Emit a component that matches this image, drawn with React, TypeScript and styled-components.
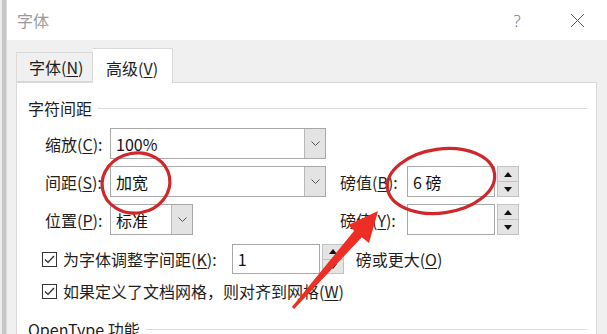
import styled, { createGlobalStyle } from "styled-components";

const GlobalStyle = createGlobalStyle`
  html, body {
    margin: 0;
    padding: 0;
  }
  body {
    width: 607px;
    height: 334px;
    overflow: hidden;
    background: #f0f0f0;
    font-family: "Noto Sans CJK SC", "Noto Sans", sans-serif;
  }
`;

const Screen = styled.div`
  position: relative;
  display: flex;
  width: 607px;
  height: 334px;
  overflow: hidden;
`;

const EdgeStrip = styled.div`
  flex: none;
  width: 7px;
  background: linear-gradient(to right, #ececec 0 2px, #c6c6c6 2px 6px, #dcdcdc 6px);
`;

const Dialog = styled.div`
  flex: 1;
  display: flex;
  flex-direction: column;
  background: #f0f0f0;
`;

const TitleBar = styled.div`
  flex: none;
  height: 40px;
  display: flex;
  align-items: center;
  padding-left: 10px;
  background: #fff;
  color: #9b9b9b;
  font-size: 16px;
`;

const TitleButtons = styled.div`
  margin-left: auto;
  display: flex;
  align-items: center;
  gap: 17px;
  padding-right: 7px;
`;

const HelpButton = styled.span`
  width: 40px;
  text-align: center;
  font-family: "Noto Sans", sans-serif;
  font-size: 17px;
  font-weight: 300;
  color: #7a7a7a;
`;

const CloseButton = styled.span`
  width: 46px;
  display: flex;
  justify-content: center;
`;

const Body = styled.div`
  flex: 1;
  display: flex;
  flex-direction: column;
  padding: 8px 10px 0 9px;
`;

const TabRow = styled.div`
  display: flex;
  align-items: flex-end;
  height: 34px;
`;

const Tab = styled.div<{ $active?: boolean; $width: number }>`
  box-sizing: border-box;
  width: ${(p) => p.$width}px;
  height: ${(p) => (p.$active ? 35 : 30)}px;
  padding: ${(p) => (p.$active ? "4px 0 1px 13px" : "0 0 0 12px")};
  margin-bottom: ${(p) => (p.$active ? "-1px" : "0")};
  display: flex;
  align-items: center;
  border: 1px solid #d9d9d9;
  border-bottom: ${(p) => (p.$active ? "none" : "1px solid #d9d9d9")};
  border-left: ${(p) => (p.$active ? "none" : "1px solid #d9d9d9")};
  background: ${(p) => (p.$active ? "#fff" : "#f0f0f0")};
  font-size: 16px;
  color: #1e1e1e;
  position: relative;
  z-index: 1;
`;

const Panel = styled.div`
  flex: 1;
  background: #fff;
  border: 1px solid #d9d9d9;
  padding: 14px 0 0 11px;
`;

const GroupHeading = styled.div<{ $top?: number }>`
  display: flex;
  align-items: center;
  gap: 6px;
  height: 22px;
  margin-top: ${(p) => p.$top ?? 0}px;
  padding-right: 9px;
  font-size: 16px;
  color: #1e1e1e;
  white-space: nowrap;
`;

const GroupLine = styled.span`
  flex: 1;
  height: 1px;
  background: #dcdcdc;
`;

const FieldGrid = styled.div`
  display: grid;
  grid-template-columns: 65px 230px 67px auto;
  grid-auto-rows: 31px;
  row-gap: 7px;
  align-items: center;
  margin-top: 9px;
  padding-left: 17px;
`;

const Label = styled.span<{ $newRow?: boolean }>`
  grid-column: ${(p) => (p.$newRow ? 1 : "auto")};
  font-size: 16px;
  line-height: 22px;
  color: #1e1e1e;
  white-space: nowrap;
`;

const Key = styled.u`
  text-underline-offset: 2px;
`;

const SelectBox = styled.div<{ $width: number }>`
  box-sizing: border-box;
  width: ${(p) => p.$width}px;
  height: 31px;
  display: flex;
  border: 1px solid #a8a8a8;
  background: #fff;
`;

const FieldValue = styled.span`
  flex: 1;
  display: flex;
  align-items: center;
  padding-left: 5px;
  font-size: 16px;
  color: #111;
`;

const DropButton = styled.span`
  width: 20px;
  display: flex;
  align-items: center;
  justify-content: center;
  background: #e3e3e3;
  border-left: 1px solid #b8b8b8;
`;

const SpinBox = styled.div<{ $height: number }>`
  display: flex;
  gap: 2px;
  height: ${(p) => p.$height}px;
`;

const SpinField = styled.div<{ $width: number }>`
  box-sizing: border-box;
  width: ${(p) => p.$width}px;
  display: flex;
  border: 1px solid #a8a8a8;
  background: #fff;
`;

const SpinButtons = styled.div`
  box-sizing: border-box;
  width: 22px;
  display: flex;
  flex-direction: column;
  border: 1px solid #c2c2c2;
  background: #e4e4e4;
`;

const SpinButton = styled.span<{ $down?: boolean }>`
  flex: 1;
  display: flex;
  align-items: center;
  justify-content: center;
  border-top: ${(p) => (p.$down ? "1px solid #c2c2c2" : "none")};
`;

const CheckRow = styled.div<{ $height: number; $top: number }>`
  display: flex;
  align-items: center;
  height: ${(p) => p.$height}px;
  margin-top: ${(p) => p.$top}px;
  padding-left: 14px;
`;

const CheckBox = styled.span`
  box-sizing: border-box;
  flex: none;
  width: 15px;
  height: 15px;
  margin-right: 6px;
  display: flex;
  align-items: center;
  justify-content: center;
  border: 1px solid #333;
  background: #fff;
`;

const Gap = styled.span<{ $w: number }>`
  flex: none;
  width: ${(p) => p.$w}px;
`;

const Overlay = styled.svg`
  position: absolute;
  left: 0;
  top: 0;
  pointer-events: none;
`;

const Chevron = () => (
  <svg width="9" height="5" viewBox="0 0 9 5">
    <path d="M0.5 0.5 L4.5 4.5 L8.5 0.5" fill="none" stroke="#555" strokeWidth="1" />
  </svg>
);

const Triangle = ({ down }: { down?: boolean }) => (
  <svg width="8" height="5" viewBox="0 0 8 5">
    <polygon points={down ? "0,0 8,0 4,5" : "0,5 8,5 4,0"} fill="#111" />
  </svg>
);

const Select = ({ value, width }: { value: string; width: number }) => (
  <SelectBox $width={width}>
    <FieldValue>{value}</FieldValue>
    <DropButton>
      <Chevron />
    </DropButton>
  </SelectBox>
);

const Spin = ({ value, width, height }: { value: string; width: number; height: number }) => (
  <SpinBox $height={height}>
    <SpinField $width={width}>
      <FieldValue>{value}</FieldValue>
    </SpinField>
    <SpinButtons>
      <SpinButton>
        <Triangle />
      </SpinButton>
      <SpinButton $down>
        <Triangle down />
      </SpinButton>
    </SpinButtons>
  </SpinBox>
);

const Check = () => (
  <CheckBox>
    <svg width="11" height="9" viewBox="0 0 11 9">
      <path d="M1 4.5 L4 7.5 L10 1" fill="none" stroke="#222" strokeWidth="1.2" />
    </svg>
  </CheckBox>
);

export default function App() {
  return (
    <>
      <GlobalStyle />
      <Screen>
        <EdgeStrip />
        <Dialog>
          <TitleBar>
            字体
            <TitleButtons>
              <HelpButton>?</HelpButton>
              <CloseButton>
                <svg width="15" height="15" viewBox="0 0 15 15">
                  <path d="M1 1 L14 14 M14 1 L1 14" stroke="#5a5a5a" strokeWidth="1" />
                </svg>
              </CloseButton>
            </TitleButtons>
          </TitleBar>
          <Body>
            <TabRow>
              <Tab $width={77}>
                字体(<Key>N</Key>)
              </Tab>
              <Tab $active $width={80}>
                高级(<Key>V</Key>)
              </Tab>
            </TabRow>
            <Panel>
              <GroupHeading>
                字符间距
                <GroupLine />
              </GroupHeading>
              <FieldGrid>
                <Label $newRow>
                  缩放(<Key>C</Key>):
                </Label>
                <Select value="100%" width={216} />
                <Label $newRow>
                  间距(<Key>S</Key>):
                </Label>
                <Select value="加宽" width={216} />
                <Label>
                  磅值(<Key>B</Key>):
                </Label>
                <Spin value="6 磅" width={88} height={31} />
                <Label $newRow>
                  位置(<Key>P</Key>):
                </Label>
                <Select value="标准" width={83} />
                <Label>
                  磅值(<Key>Y</Key>):
                </Label>
                <Spin value="" width={88} height={31} />
              </FieldGrid>
              <CheckRow $height={30} $top={9}>
                <Check />
                <Label>
                  为字体调整字间距(<Key>K</Key>):
                </Label>
                <Gap $w={15} />
                <Spin value="1" width={88} height={30} />
                <Gap $w={12} />
                <Label>
                  磅或更大(<Key>O</Key>)
                </Label>
              </CheckRow>
              <CheckRow $height={22} $top={6}>
                <Check />
                <Label>
                  如果定义了文档网格，则对齐到网格(<Key>W</Key>)
                </Label>
              </CheckRow>
              <GroupHeading $top={16}>
                OpenType 功能
                <GroupLine />
              </GroupHeading>
            </Panel>
          </Body>
        </Dialog>
        <Overlay width="607" height="334" viewBox="0 0 607 334">
          <ellipse
            cx="136"
            cy="183"
            rx="34"
            ry="30"
            transform="rotate(-10 136 183)"
            fill="none"
            stroke="#d0282a"
            strokeWidth="3.2"
          />
          <ellipse
            cx="441"
            cy="181"
            rx="54"
            ry="32"
            transform="rotate(-8 441 181)"
            fill="none"
            stroke="#d0282a"
            strokeWidth="3.2"
          />
          <polygon
            points="378,211 369,243 361.8,237.3 294.1,309 291.9,307 354.2,230.7 348,225"
            fill="#ee2d24"
          />
        </Overlay>
      </Screen>
    </>
  );
}
